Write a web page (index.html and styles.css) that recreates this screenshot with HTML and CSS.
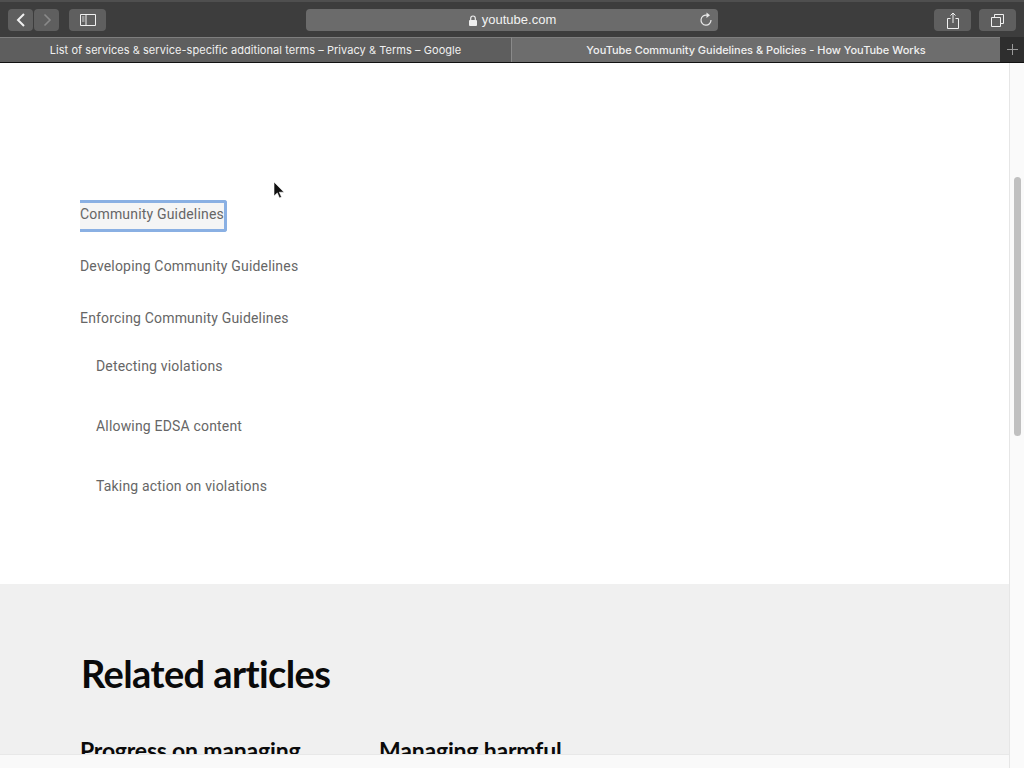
FILE: index.html
```html
<!DOCTYPE html>
<html lang="en">
<head>
<meta charset="utf-8">
<title>YouTube Community Guidelines &amp; Policies - How YouTube Works</title>
<link rel="stylesheet" href="styles.css">
</head>
<body>
<div class="browser">
  <header class="toolbar">
    <div class="group">
      <div class="pair">
        <div class="btn btn-nav">
          <svg width="12" height="16" viewBox="0 0 12 16"><path d="M9 2 3 8l6 6" fill="none" stroke="#f0f0f0" stroke-width="2"/></svg>
        </div>
        <div class="btn btn-nav">
          <svg width="12" height="16" viewBox="0 0 12 16"><path d="M3.500 2.500 9 8l-5.500 5.500" fill="none" stroke="#8a8a8a" stroke-width="1.600"/></svg>
        </div>
      </div>
      <div class="btn btn-wide">
        <svg width="16" height="12" viewBox="0 0 16 12"><path d="M.5.500h15v11H.5zM6 .5v11" fill="none" stroke="#f0f0f0"/><path d="M2 3h2.500M2 5h2.500M2 7h2.500" stroke="#d0d0d0"/></svg>
      </div>
    </div>
    <div class="address">
      <span class="host">
        <svg width="10" height="11" viewBox="0 0 10 11"><path d="M2.700 5V3.300a2.300 2.300 0 0 1 4.600 0V5" fill="none" stroke="#eee" stroke-width="1.200"/><rect x="1" y="5" width="8" height="6" rx="1" fill="#eee"/></svg>
        youtube.com
      </span>
      <svg class="reload" width="14" height="15" viewBox="0 0 14 15"><path d="M8 3.200A5 5 0 1 0 12 8" fill="none" stroke="#e8e8e8" stroke-width="1.200"/><path d="M7.500.5 11 3.200 7.500 6z" fill="#e8e8e8"/></svg>
    </div>
    <div class="group group-right">
      <div class="btn btn-wide">
        <svg width="12" height="17" viewBox="0 0 12 17"><path d="M3.500 6.500H.5v10h11v-10h-3" fill="none" stroke="#f0f0f0"/><path d="M6 11V1M3.500 3.500 6 1l2.500 2.500" fill="none" stroke="#f0f0f0"/></svg>
      </div>
      <div class="btn btn-wide">
        <svg width="13" height="13" viewBox="0 0 13 13"><path d="M.5 3.500h9v9h-9z" fill="none" stroke="#f0f0f0"/><path d="M3.500 3V.5h9v9H10" fill="none" stroke="#f0f0f0"/></svg>
      </div>
    </div>
  </header>
  <nav class="tabs">
    <div class="tab tab-back">List of services &amp; service-specific additional terms – Privacy &amp; Terms – Google</div>
    <div class="tab tab-active">YouTube Community Guidelines &amp; Policies - How YouTube Works</div>
    <div class="tab-new">
      <svg width="11" height="11" viewBox="0 0 11 11"><path d="M5.500 0v11M0 5.500h11" stroke="#9a9a9a"/></svg>
    </div>
  </nav>
  <div class="viewport">
    <div class="page">
      <main class="scroller">
        <section class="toc">
          <a class="toc-link toc-focus">Community Guidelines</a>
          <a class="toc-link">Developing Community Guidelines</a>
          <a class="toc-link">Enforcing Community Guidelines</a>
          <div class="toc-sub">
            <a class="sub-link">Detecting violations</a>
            <a class="sub-link">Allowing EDSA content</a>
            <a class="sub-link">Taking action on violations</a>
          </div>
        </section>
        <section class="related">
          <h2 class="related-title">Related articles</h2>
          <div class="related-grid">
            <h3 class="related-item">Progress on managing</h3>
            <h3 class="related-item">Managing harmful</h3>
          </div>
        </section>
      </main>
      <div class="status-strip"></div>
    </div>
    <aside class="scrollbar"><div class="thumb"></div></aside>
    <svg class="cursor" width="12" height="19" viewBox="0 0 12 19"><path d="M1 1v14l3.300-3.100 2.200 5.100 2-.9-2.200-4.900H11z" fill="#111" stroke="#fff" stroke-width=".6"/></svg>
  </div>
</div>
</body>
</html>
```
FILE: styles.css
```css
html, body {
  margin: 0;
  height: 768px;
  overflow: hidden;
  background: #fff;
}
.browser {
  position: relative;
  display: flex;
  flex-direction: column;
  height: 768px;
  font-family: Roboto, "Liberation Sans", sans-serif;
}
.toolbar {
  flex: none;
  display: flex;
  align-items: center;
  justify-content: space-between;
  box-sizing: border-box;
  height: 37px;
  padding: 6px 8px 5px;
  background: #3d3d3d;
  border-top: 2px solid #4f4f4f;
}
.group {
  display: flex;
  gap: 10px;
  width: 298px;
}
.group-right {
  justify-content: flex-end;
  gap: 8px;
}
.pair {
  display: flex;
  gap: 1px;
}
.btn {
  display: flex;
  align-items: center;
  justify-content: center;
  height: 22px;
  background: #5f5f5f;
  border-radius: 4px;
}
.btn-nav { width: 25px; }
.btn-wide { width: 37px; }
.address {
  position: relative;
  display: flex;
  align-items: center;
  justify-content: center;
  width: 412px;
  height: 22px;
  background: #6b6b6b;
  border-radius: 4px;
}
.host {
  display: flex;
  align-items: center;
  gap: 4px;
  color: #f2f2f2;
  font: 13px/22px "Liberation Sans", sans-serif;
}
.reload {
  position: absolute;
  right: 5px;
  top: 3px;
}
.tabs {
  flex: none;
  display: flex;
  height: 26px;
  box-sizing: border-box;
  border-bottom: 1px solid #111;
  color: #f0f0f0;
  font: 11px/24px Inter, "Liberation Sans", sans-serif;
}
.tab {
  box-sizing: border-box;
  border-top: 1px solid #7e7e7e;
  background: #5e5e5e;
  text-align: center;
  white-space: nowrap;
}
.tab-back {
  width: 512px;
  border-right: 1px solid #8a8a8a;
  letter-spacing: .05px;
}
.tab-active {
  width: 488px;
  background: #6d6d6d;
  font-weight: 500;
  letter-spacing: -.03px;
}
.tab-new {
  flex: 1;
  display: flex;
  align-items: center;
  justify-content: center;
  background: #2e2e2e;
}
.viewport {
  position: relative;
  flex: 1;
  display: flex;
  min-height: 0;
}
.page {
  flex: 1;
  display: flex;
  flex-direction: column;
  min-width: 0;
}
.scroller {
  flex: 1;
  min-height: 0;
  overflow: hidden;
}
.toc {
  display: flex;
  flex-direction: column;
  align-items: flex-start;
  padding: 137px 0 66px 80px;
  color: #666;
  font-size: 14px;
  letter-spacing: .18px;
}
.toc-link {
  display: block;
  box-sizing: border-box;
  height: 32px;
  margin-bottom: 20px;
  padding-top: 3px;
  line-height: 16px;
  border: 3px solid transparent;
  border-left: 0;
}
.toc-link:nth-child(3) { margin-bottom: 2px; }
.toc-focus {
  border-color: #8ab0e3;
  border-radius: 0 3px 3px 0;
  background: #f5f5f5;
}
.toc-sub {
  display: flex;
  flex-direction: column;
  padding-left: 16px;
}
.sub-link {
  display: block;
  height: 60px;
  box-sizing: border-box;
  padding-top: 20px;
  line-height: 16px;
}
.related {
  height: 300px;
  padding: 66px 0 0 81px;
  background: #f0f0f0;
  color: #0a0a0a;
  font-variant-ligatures: none;
}
.related-title {
  margin: 0;
  font: 700 38px/46px Lato, sans-serif;
  letter-spacing: -.6px;
}
.related-grid {
  display: grid;
  grid-template-columns: 299px 299px;
  margin: 39px 0 0 -1px;
}
.related-item {
  margin: 0;
  font: 700 23px/30px Lato, sans-serif;
  letter-spacing: -.2px;
}
.status-strip {
  flex: none;
  height: 14px;
  background: #f9f9f9;
  border-top: 1px solid #e8e8e8;
  box-sizing: border-box;
}
.scrollbar {
  flex: none;
  box-sizing: border-box;
  width: 15px;
  padding: 114px 3px 0 4px;
  background: #fafafa;
  border-left: 1px solid #e6e6e6;
}
.thumb {
  height: 259px;
  background: #c0c0c0;
  border-radius: 4px;
}
.cursor {
  position: absolute;
  left: 273px;
  top: 118px;
}
```
